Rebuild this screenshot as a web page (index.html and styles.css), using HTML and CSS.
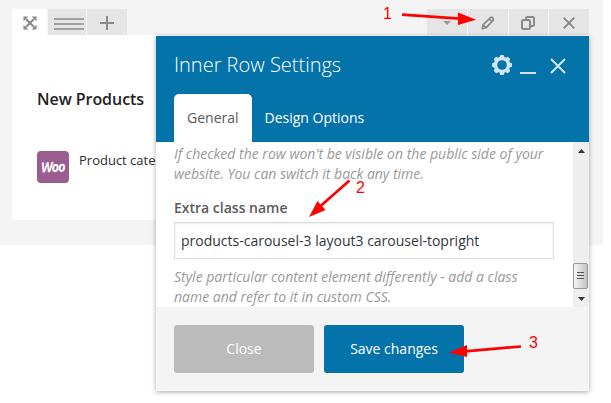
FILE: index.html
```html
<!DOCTYPE html>
<html lang="en">
<head>
<meta charset="utf-8">
<title>Inner Row Settings</title>
<link rel="stylesheet" href="styles.css">
</head>
<body>
<main class="workspace">
  <div class="toolbar">
    <div class="controls">
      <span class="control control-move"><svg width="14" height="14" viewBox="0 0 14 14"><path d="M3 3l8 8M11 3l-8 8" stroke="#888" stroke-width="2"/><path d="M.5.5h4.800L.5 5.300zM13.500.5v4.800L8.700.5zM.5 13.500V8.700l4.800 4.800zM13.500 13.500H8.700l4.800-4.800z" fill="#888"/></svg></span>
      <span class="control control-layout"><svg width="30" height="12" viewBox="0 0 30 12"><path d="M0 1h30M0 6h30M0 11h30" stroke="#a0a0a0" stroke-width="2"/></svg></span>
      <span class="control control-add"><svg width="14" height="14" viewBox="0 0 14 14"><path d="M7 0v14M0 7h14" stroke="#888" stroke-width="2"/></svg></span>
    </div>
    <div class="controls">
      <span class="control"><svg width="8" height="4" viewBox="0 0 8 4"><path d="M0 0h8L4 4z" fill="#999"/></svg></span>
      <span class="control"><svg width="14" height="14" viewBox="0 0 14 14" fill="none" stroke="#888" stroke-width="1.700" stroke-linejoin="round"><path d="M1.200 12.800l1-4.200L9.500 1.600q1.100-.9 2.300.4 1.100 1.200.3 2.300L5.200 11.700zM8.300 3l2.600 2.500M2.300 9l2.600 2.600"/></svg></span>
      <span class="control"><svg width="16" height="14" viewBox="0 0 16 14" fill="none" stroke="#888" stroke-width="2"><rect x="2" y="4" width="8" height="9" rx="1.500"/><path d="M6 3.500V2.500Q6 1 7.500 1H12.500Q14 1 14 2.500V8.500Q14 10 12.500 10H11"/></svg></span>
      <span class="control"><svg width="12" height="12" viewBox="0 0 12 12"><path d="M.7.7l10.600 10.600M11.300.7L.7 11.300" stroke="#888" stroke-width="1.900"/></svg></span>
    </div>
  </div>
  <section class="row-panel">
    <h2 class="row-title">New Products</h2>
    <div class="element"><span class="woo"><span class="woo-text">Woo</span></span><span class="element-name">Product cate</span></div>
  </section>
</main>

<section class="dialog">
  <header class="dialog-header">
    <div class="title-bar">
      <h1 class="dialog-title">Inner Row Settings</h1>
      <div class="window-icons">
        <svg width="20" height="20" viewBox="-10 -10 20 20" fill="#cfe6f3"><g><rect x="-2.200" y="-10" width="4.400" height="20" rx="1.300"/><rect x="-2.200" y="-10" width="4.400" height="20" rx="1.300" transform="rotate(45)"/><rect x="-2.200" y="-10" width="4.400" height="20" rx="1.300" transform="rotate(90)"/><rect x="-2.200" y="-10" width="4.400" height="20" rx="1.300" transform="rotate(135)"/><circle r="8.300"/></g><circle r="4.800" fill="#0473aa"/></svg>
        <span class="minimize"></span>
        <svg class="close-icon" width="16" height="16" viewBox="0 0 16 16"><path d="M1 1l14 14M15 1L1 15" stroke="#cfe6f3" stroke-width="2"/></svg>
      </div>
    </div>
    <nav class="tabs"><span class="tab tab-active">General</span><span class="tab">Design Options</span></nav>
  </header>
  <div class="dialog-body">
    <div class="form">
      <p class="hint">If checked the row won't be visible on the public side of your<br>website. You can switch it back any time.</p>
      <label class="label" for="cls">Extra class name</label>
      <input class="field" id="cls" value="products-carousel-3 layout3 carousel-topright">
      <p class="hint hint-bottom">Style particular content element differently - add a class<br>name and refer to it in custom CSS.</p>
    </div>
    <div class="scrollbar">
      <svg width="7" height="4" viewBox="0 0 7 4"><path d="M0 4h7L3.500 0z" fill="#333"/></svg>
      <span class="thumb"><svg width="7" height="8" viewBox="0 0 7 8"><path d="M0 .5h7M0 3.500h7M0 6.500h7" stroke="#555"/></svg></span>
      <svg class="arrow-down" width="7" height="4" viewBox="0 0 7 4"><path d="M0 0h7L3.500 4z" fill="#333"/></svg>
    </div>
  </div>
  <footer class="dialog-footer"><button class="button">Close</button><button class="button button-primary">Save changes</button></footer>
</section>

<svg class="annotations" width="611" height="403" viewBox="0 0 611 403">
  <g stroke="#f00" stroke-width="2.700" fill="none"><path d="M402 14.700L460 18.700M349.500 180.500L320 206.500M521 346.500L465 351.300"/></g>
  <g fill="#f00"><path d="M476 19.700L458 25V12.500zM309 217l8.500-16 8 9zM449 352.500l18-7.500v12z"/></g>
  <g class="numbers"><text x="383" y="19">1</text><text x="356" y="193">2</text><text x="529" y="347.500">3</text></g>
</svg>
</body>
</html>
```
FILE: styles.css
```css
* { box-sizing: border-box; }
body { margin: 0; width: 611px; height: 403px; overflow: hidden; background: #fff; font: 14px/20px "Open Sans", "Noto Sans", sans-serif; color: #2c2c2c; }
h1, h2, p { margin: 0; }
svg { display: block; flex: none; }
.workspace { width: 603px; height: 245px; padding: 9px 14px 0 12px; background: #f4f4f4; }
.toolbar { display: flex; justify-content: space-between; height: 26px; }
.controls { display: flex; gap: 1px; }
.control { display: flex; align-items: center; justify-content: center; width: 39.750px; height: 26px; background: #e5e5e5; padding-top: 1px; }
.control-move { width: 35px; background: #fff; }
.control-layout { width: 38px; padding: 4px 0 0 3px; }
.control-add { width: 40px; }
.row-panel { height: 185px; padding: 54px 25px 0; background: #fff; }
.row-title { font-size: 16px; line-height: 20px; font-weight: 600; color: #222; letter-spacing: -.05px; white-space: nowrap; }
.element { display: flex; gap: 10px; margin-top: 42px; font-size: 13px; }
.woo { display: flex; align-items: center; justify-content: center; width: 32px; height: 32px; border-radius: 4px; background: #9b5c8f; }
.woo-text { color: #fff; font: italic 700 14px/16px "Open Sans", sans-serif; letter-spacing: -1.200px; transform: rotate(-3deg) scaleX(.93); }
.element-name { margin-top: -1px; line-height: 20px; white-space: nowrap; }

.dialog { position: absolute; left: 156px; top: 36px; width: 433px; height: 355px; background: #fff; box-shadow: 0 1px 5px rgba(0,0,0,.34); }
.dialog-header { display: flex; flex-direction: column; justify-content: space-between; height: 106px; padding-left: 18px; background: #0473aa; }
.title-bar { display: flex; justify-content: space-between; padding: 16px 23px 0 0; }
.dialog-title { color: #fff; font-size: 20px; line-height: 25px; font-weight: 300; white-space: nowrap; }
.window-icons { display: flex; align-items: flex-start; padding-top: 3px; }
.minimize { width: 16px; height: 2px; margin: 17px 13px 0 8px; background: #cfe6f3; }
.close-icon { margin: 3px 0 0 1px; }
.tabs { display: flex; height: 48px; }
.tab { padding: 14px 12.500px 0; color: #fff; white-space: nowrap; }
.tab-active { width: 78px; padding-left: 13px; border-radius: 5px 5px 0 0; background: #fff; color: #5a5a5a; }
.dialog-body { display: flex; justify-content: space-between; height: 165px; overflow: hidden; }
.form { width: 398px; padding: 2px 0 0 18px; }
.hint { color: #999; font-style: italic; white-space: nowrap; }
.label { display: block; margin: 14px 0 4px; font-weight: 600; color: #5a5a5a; }
.field { display: block; width: 380px; height: 37px; border: 1px solid #ddd; padding: 0 6px; font: 14px "Open Sans", sans-serif; color: #32373c; box-shadow: inset 0 1px 2px rgba(0,0,0,.07); }
.hint-bottom { margin-top: 8px; }
.scrollbar { display: flex; flex-direction: column; align-items: center; width: 16px; padding: 7px 0 6px; background: #eee; }
.thumb { display: flex; align-items: center; justify-content: center; align-self: flex-start; width: 15px; height: 26px; margin-top: auto; border: 1px solid #999; border-radius: 2px; background: linear-gradient(90deg, #f7f7f7, #ddd 50%, #c2c2c2); }
.arrow-down { margin-top: 8px; }
.dialog-footer { display: flex; gap: 10px; height: 84px; padding: 18px; background: #f4f4f4; }
.button { width: 140px; height: 48px; padding: 0 0 2px; border: 0; border-radius: 3px; background: #bbb; color: #fff; font: 14px "Open Sans", sans-serif; }
.button-primary { background: #0473aa; }
.annotations { position: absolute; left: 0; top: 0; }
.numbers { fill: #f00; font: 16px "Liberation Sans", sans-serif; }
```
